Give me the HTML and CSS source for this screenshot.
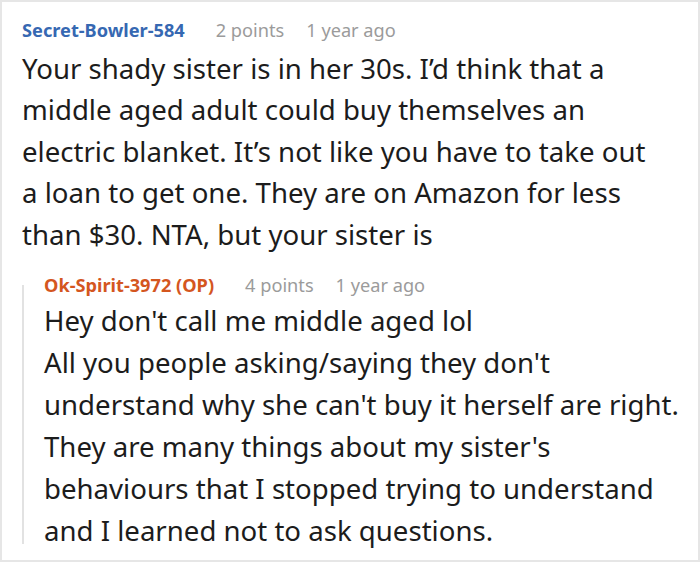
FILE: index.html
```html
<!DOCTYPE html>
<html>
<head>
<meta charset="utf-8">
<link rel="stylesheet" href="styles.css">
</head>
<body>
<div class="frame">
  <div class="comment">
    <div class="meta">
      <span class="author">Secret-Bowler-584</span>
      <span class="points">2 points</span>
      <span class="time">1 year ago</span>
    </div>
    <p class="body body-main">Your shady sister is in her 30s. I’d think that a middle aged adult could buy themselves an electric blanket. It’s not like you have to take out a loan to get one. They are on Amazon for less than $30. NTA, but your sister is</p>
    <div class="reply">
      <div class="meta meta-reply">
        <span class="author op">Ok-Spirit-3972 (OP)</span>
        <span class="points">4 points</span>
        <span class="time">1 year ago</span>
      </div>
      <p class="body body-reply">Hey don't call me middle aged lol<br>All you people asking/saying they don't understand why she can't buy it herself are right. They are many things about my sister's behaviours that I stopped trying to understand and I learned not to ask questions.</p>
    </div>
  </div>
</div>
</body>
</html>
```
FILE: styles.css
```css
html, body {
  margin: 0;
  padding: 0;
  background: #ffffff;
}
.frame {
  box-sizing: border-box;
  width: 700px;
  height: 562px;
  border: 2px solid #e6e6e6;
  overflow: hidden;
  font-family: "Noto Sans", "Open Sans", sans-serif;
}
.comment {
  padding: 18px 10px 0 20px;
}
.meta {
  display: flex;
  align-items: baseline;
  font-size: 18.2px;
  line-height: 20px;
  white-space: nowrap;
}
.author {
  font-weight: 700;
  color: #3668b2;
}
.author.op {
  color: #d4561f;
}
.points {
  color: #9b9b9b;
  margin-left: 31px;
}
.time {
  color: #9b9b9b;
  margin-left: 22px;
}
.body {
  margin: 7.5px 0 0 0;
  font-size: 27.6px;
  line-height: 41.5px;
  color: #1c1c1c;
}
.body-main {
  margin-right: 25px;
}
.reply {
  display: flex;
  flex-direction: column;
  margin-top: 30px;
  border-left: 2px solid #e2e2e2;
  padding-left: 20px;
}
.meta-reply {
  line-height: 14px;
  margin-top: -7px;
}
.body-reply {
  margin-top: 7.3px;
  margin-bottom: -7px;
  line-height: 42px;
}
```
